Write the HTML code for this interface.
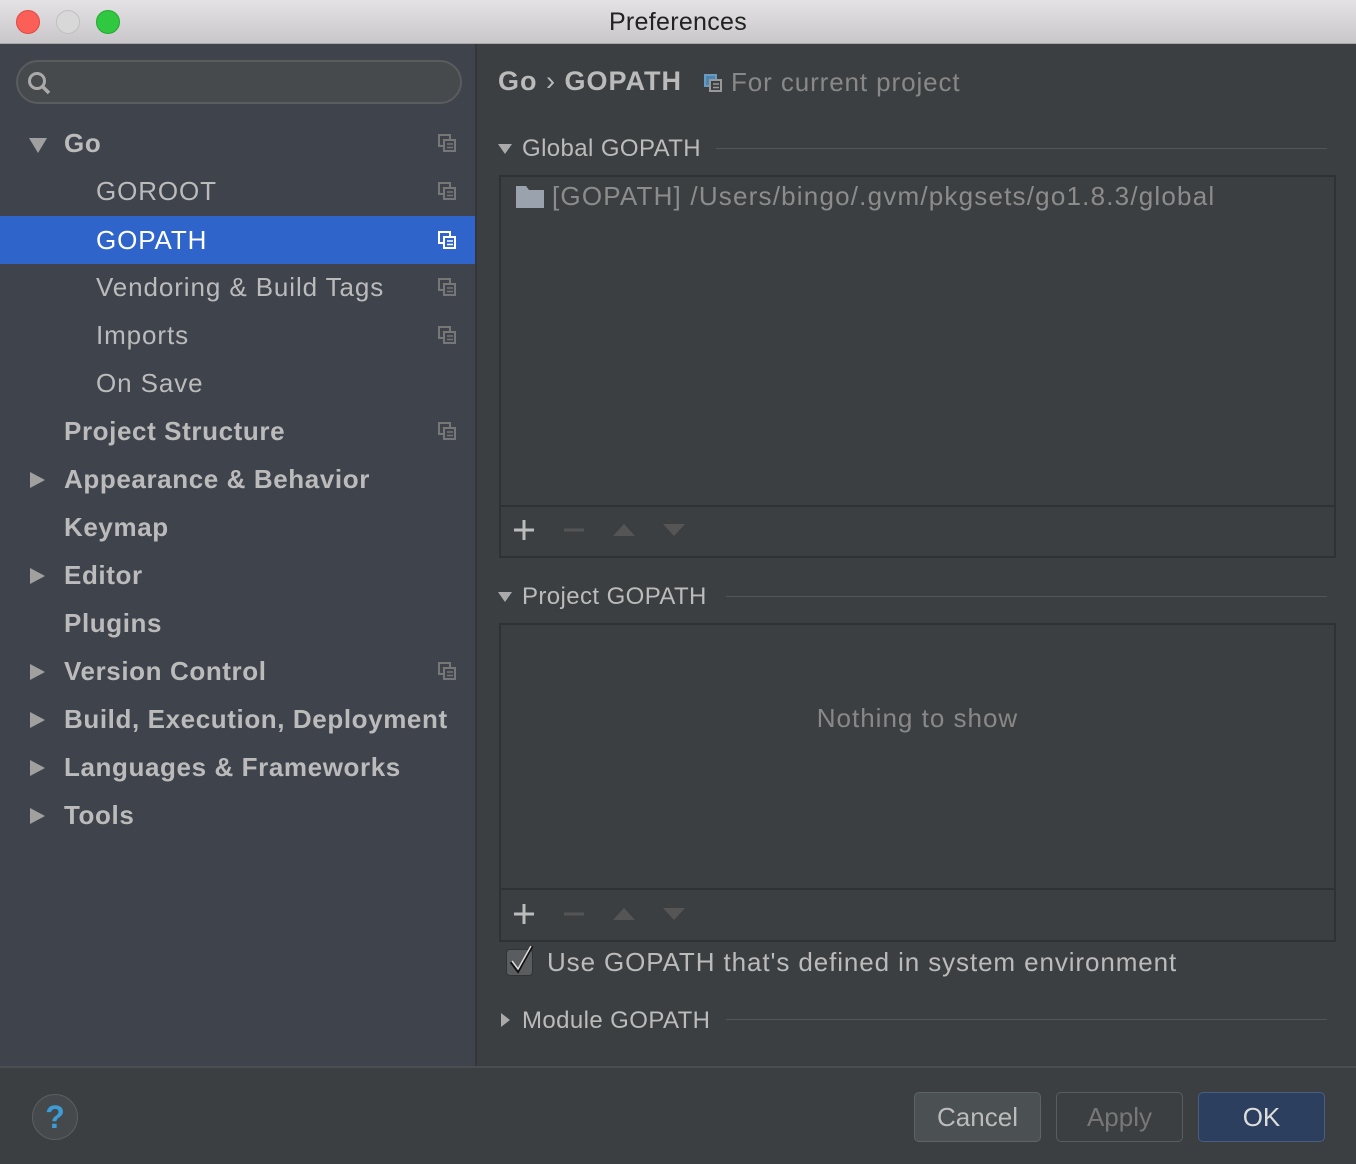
<!DOCTYPE html>
<html><head><style>
*{margin:0;padding:0;box-sizing:border-box}
body{width:1356px;height:1164px;background:#3c3f41;font-family:"Liberation Sans",sans-serif;position:relative;overflow:hidden}
.a{position:absolute}
.title{left:0;top:0;width:1356px;height:44px;background:linear-gradient(#e4e2e4,#c9c7c9);border-bottom:1px solid #a8a8a8;text-align:center;line-height:44px;font-size:25px;color:#222;letter-spacing:0.3px}
.dot{width:24px;height:24px;border-radius:50%;top:10px}
.side{left:0;top:44px;width:477px;height:1022px;background:#3f434c;border-right:2px solid #33363a}
.item{position:absolute;left:0;width:475px;height:48px;line-height:48px;font-size:26px;color:#bbbbbb;letter-spacing:0.9px}
.b{font-weight:bold;letter-spacing:0.6px}
.sel{background:#2f65ca;color:#fff}
.tri{position:absolute;left:30px;top:17px;width:0;height:0;border-top:8px solid transparent;border-bottom:8px solid transparent;border-left:15px solid #a0a0a0}
.tdown{position:absolute;left:29px;top:19px;width:0;height:0;border-left:9px solid transparent;border-right:9px solid transparent;border-top:15px solid #a0a0a0}
.ic{position:absolute;left:438px;top:15px}
.hdr{font-size:24px;color:#bbb;letter-spacing:0.4px}
.line{height:1px;background:#555}
.box{border:2px solid #2f3133;background:#3c3f41}
.btn{top:1092px;height:50px;border-radius:5px;font-size:26px;text-align:center;line-height:48px}
</style></head><body>
<div class="a title">Preferences</div>
<div class="a dot" style="left:16px;background:#fc5f57;border:1px solid #de4a42"></div>
<div class="a dot" style="left:56px;background:#d8d8d8;border:1px solid #c0c0c0"></div>
<div class="a dot" style="left:96px;background:#2fc840;border:1px solid #22a82f"></div>
<div class="a side">
 <div class="a" style="left:16px;top:16px;width:446px;height:44px;border-radius:22px;background:#474a4c;border:2px solid #5a5c5e"></div>
 <svg class="a" style="left:26px;top:26px" width="26" height="26" viewBox="0 0 26 26"><circle cx="11" cy="11" r="7.5" fill="none" stroke="#aaa" stroke-width="3"/><line x1="16.5" y1="16.5" x2="23" y2="23" stroke="#aaa" stroke-width="3.5"/></svg>
</div>
<div class="a" style="left:0;top:0">
<div class="item b" style="top:119px"><div class="tdown"></div><span style="margin-left:64px">Go</span><svg class="ic" width="18" height="18"><rect x="1" y="1" width="11" height="11" fill="none" stroke="#777" stroke-width="2"/><rect x="6" y="6" width="11" height="11" fill="#3f434c" stroke="#777" stroke-width="2"/><line x1="9" y1="10" x2="15" y2="10" stroke="#777" stroke-width="1.5"/><line x1="9" y1="13.5" x2="15" y2="13.5" stroke="#777" stroke-width="1.5"/></svg></div>
<div class="item" style="top:167px"><span style="margin-left:96px">GOROOT</span><svg class="ic" width="18" height="18"><rect x="1" y="1" width="11" height="11" fill="none" stroke="#777" stroke-width="2"/><rect x="6" y="6" width="11" height="11" fill="#3f434c" stroke="#777" stroke-width="2"/><line x1="9" y1="10" x2="15" y2="10" stroke="#777" stroke-width="1.5"/><line x1="9" y1="13.5" x2="15" y2="13.5" stroke="#777" stroke-width="1.5"/></svg></div>
<div class="item sel" style="top:216px"><span style="margin-left:96px">GOPATH</span><svg class="ic" width="18" height="18"><rect x="1" y="1" width="11" height="11" fill="none" stroke="#fff" stroke-width="2"/><rect x="6" y="6" width="11" height="11" fill="#2f65ca" stroke="#fff" stroke-width="2"/><line x1="9" y1="10" x2="15" y2="10" stroke="#fff" stroke-width="1.5"/><line x1="9" y1="13.5" x2="15" y2="13.5" stroke="#fff" stroke-width="1.5"/></svg></div>
<div class="item" style="top:263px"><span style="margin-left:96px">Vendoring &amp; Build Tags</span><svg class="ic" width="18" height="18"><rect x="1" y="1" width="11" height="11" fill="none" stroke="#777" stroke-width="2"/><rect x="6" y="6" width="11" height="11" fill="#3f434c" stroke="#777" stroke-width="2"/><line x1="9" y1="10" x2="15" y2="10" stroke="#777" stroke-width="1.5"/><line x1="9" y1="13.5" x2="15" y2="13.5" stroke="#777" stroke-width="1.5"/></svg></div>
<div class="item" style="top:311px"><span style="margin-left:96px">Imports</span><svg class="ic" width="18" height="18"><rect x="1" y="1" width="11" height="11" fill="none" stroke="#777" stroke-width="2"/><rect x="6" y="6" width="11" height="11" fill="#3f434c" stroke="#777" stroke-width="2"/><line x1="9" y1="10" x2="15" y2="10" stroke="#777" stroke-width="1.5"/><line x1="9" y1="13.5" x2="15" y2="13.5" stroke="#777" stroke-width="1.5"/></svg></div>
<div class="item" style="top:359px"><span style="margin-left:96px">On Save</span></div>
<div class="item b" style="top:407px"><span style="margin-left:64px">Project Structure</span><svg class="ic" width="18" height="18"><rect x="1" y="1" width="11" height="11" fill="none" stroke="#777" stroke-width="2"/><rect x="6" y="6" width="11" height="11" fill="#3f434c" stroke="#777" stroke-width="2"/><line x1="9" y1="10" x2="15" y2="10" stroke="#777" stroke-width="1.5"/><line x1="9" y1="13.5" x2="15" y2="13.5" stroke="#777" stroke-width="1.5"/></svg></div>
<div class="item b" style="top:455px"><div class="tri"></div><span style="margin-left:64px">Appearance &amp; Behavior</span></div>
<div class="item b" style="top:503px"><span style="margin-left:64px">Keymap</span></div>
<div class="item b" style="top:551px"><div class="tri"></div><span style="margin-left:64px">Editor</span></div>
<div class="item b" style="top:599px"><span style="margin-left:64px">Plugins</span></div>
<div class="item b" style="top:647px"><div class="tri"></div><span style="margin-left:64px">Version Control</span><svg class="ic" width="18" height="18"><rect x="1" y="1" width="11" height="11" fill="none" stroke="#777" stroke-width="2"/><rect x="6" y="6" width="11" height="11" fill="#3f434c" stroke="#777" stroke-width="2"/><line x1="9" y1="10" x2="15" y2="10" stroke="#777" stroke-width="1.5"/><line x1="9" y1="13.5" x2="15" y2="13.5" stroke="#777" stroke-width="1.5"/></svg></div>
<div class="item b" style="top:695px"><div class="tri"></div><span style="margin-left:64px">Build, Execution, Deployment</span></div>
<div class="item b" style="top:743px"><div class="tri"></div><span style="margin-left:64px">Languages &amp; Frameworks</span></div>
<div class="item b" style="top:791px"><div class="tri"></div><span style="margin-left:64px">Tools</span></div>
</div>

<div class="a b" style="left:498px;top:66px;font-size:27px;color:#bbb;letter-spacing:1px">Go <span style="font-weight:normal">›</span> GOPATH</div>
<svg class="a" style="left:704px;top:74px" width="18" height="18"><rect x="1" y="1" width="11" height="11" fill="#4a86b4" stroke="#6a9ac0" stroke-width="2"/><rect x="6" y="6" width="11" height="11" fill="#3c3f41" stroke="#999" stroke-width="2"/><line x1="9" y1="10" x2="15" y2="10" stroke="#999" stroke-width="1.5"/><line x1="9" y1="13.5" x2="15" y2="13.5" stroke="#999" stroke-width="1.5"/></svg>
<div class="a" style="left:731px;top:67px;font-size:26px;color:#888;letter-spacing:0.9px">For current project</div>

<div class="a" style="left:498px;top:144px;border-left:7px solid transparent;border-right:7px solid transparent;border-top:10px solid #aaa"></div>
<div class="a hdr" style="left:522px;top:135px">Global GOPATH</div>
<div class="a line" style="left:716px;top:148px;width:611px"></div>
<div class="a box" style="left:499px;top:175px;width:837px;height:383px"></div>
<div class="a" style="left:501px;top:505px;width:833px;height:2px;background:#2f3133"></div>
<svg class="a" style="left:516px;top:186px" width="28" height="22"><path d="M0 0H10L13 4H28V22H0Z" fill="#9aa3ad"/></svg>
<div class="a" style="left:552px;top:181px;font-size:26px;color:#8c8c8c;letter-spacing:1.2px">[GOPATH] /Users/bingo/.gvm/pkgsets/go1.8.3/global</div>
<svg class="a" style="left:512px;top:518px" width="180" height="24"><path d="M12 2V22M2 12H22" stroke="#bbb" stroke-width="3"/><path d="M52 12H72" stroke="#555" stroke-width="3"/><path d="M101 18L112 6L123 18Z" fill="#555"/><path d="M151 6L162 18L173 6Z" fill="#555"/></svg>

<div class="a" style="left:498px;top:592px;border-left:7px solid transparent;border-right:7px solid transparent;border-top:10px solid #aaa"></div>
<div class="a hdr" style="left:522px;top:583px">Project GOPATH</div>
<div class="a line" style="left:726px;top:596px;width:601px"></div>
<div class="a box" style="left:499px;top:623px;width:837px;height:319px"></div>
<div class="a" style="left:501px;top:888px;width:833px;height:2px;background:#2f3133"></div>
<div class="a" style="left:499px;top:703px;width:837px;text-align:center;font-size:26px;color:#888;letter-spacing:1px">Nothing to show</div>
<svg class="a" style="left:512px;top:902px" width="180" height="24"><path d="M12 2V22M2 12H22" stroke="#bbb" stroke-width="3"/><path d="M52 12H72" stroke="#555" stroke-width="3"/><path d="M101 18L112 6L123 18Z" fill="#555"/><path d="M151 6L162 18L173 6Z" fill="#555"/></svg>

<div class="a" style="left:506px;top:949px;width:27px;height:27px;border-radius:4px;background:#5a5d5f;border:1px solid #333"></div>
<svg class="a" style="left:506px;top:944px" width="30" height="32"><path d="M5 18L12 27L26 2" fill="none" stroke="#111" stroke-width="3"/><path d="M6 17L12 25L25 2" fill="none" stroke="#ddd" stroke-width="1.5"/></svg>
<div class="a" style="left:547px;top:947px;font-size:26px;color:#bbb;letter-spacing:0.9px">Use GOPATH that's defined in system environment</div>

<div class="a" style="left:501px;top:1013px;border-top:7px solid transparent;border-bottom:7px solid transparent;border-left:9px solid #aaa"></div>
<div class="a hdr" style="left:522px;top:1007px">Module GOPATH</div>
<div class="a line" style="left:726px;top:1019px;width:601px"></div>

<div class="a" style="left:0;top:1066px;width:1356px;height:2px;background:#4b4e50"></div>
<div class="a" style="left:32px;top:1094px;width:46px;height:46px;border-radius:50%;background:#45494b;border:1px solid #5b5e60;text-align:center;line-height:44px;font-size:32px;font-weight:bold;color:#3d9bd6">?</div>
<div class="a btn" style="left:914px;width:127px;background:#4b5052;border:1px solid #5e6365;color:#bbb">Cancel</div>
<div class="a btn" style="left:1056px;width:127px;background:#3c3f41;border:1px solid #5a5d5f;color:#777">Apply</div>
<div class="a btn" style="left:1198px;width:127px;background:#2c3f5e;border:1px solid #4a5d80;color:#ddd">OK</div>
</body></html>
